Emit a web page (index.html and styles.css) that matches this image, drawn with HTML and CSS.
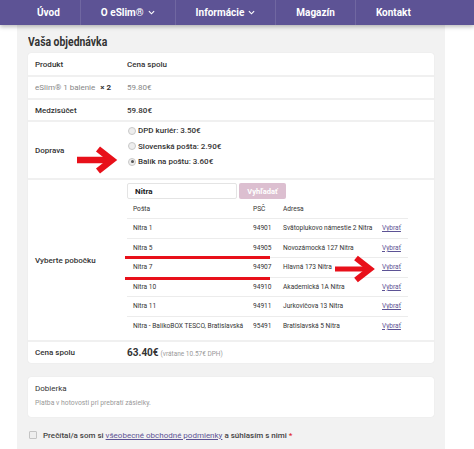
FILE: index.html
```html
<!DOCTYPE html>
<html lang="sk">

<head>
    <meta charset="UTF-8">
    <meta name="viewport" content="width=device-width, initial-scale=1.0">
    <title>Vaša objednávka</title>
    <link rel="stylesheet" href="styles.css">
</head>

<body>
    <nav class="topnav">
        <ul class="menu">
            <li><a href="#">Úvod</a></li>
            <li><a href="#">O eSlim® <svg class="chev" viewBox="0 0 8 5"><polyline points="1,1 4,4 7,1" /></svg></a></li>
            <li><a href="#">Informácie <svg class="chev" viewBox="0 0 8 5"><polyline points="1,1 4,4 7,1" /></svg></a></li>
            <li><a href="#">Magazín</a></li>
            <li><a href="#">Kontakt</a></li>
        </ul>
    </nav>

    <main class="page">
        <h2 class="section-title"><span>Vaša objednávka</span></h2>

        <div class="card order">
            <div class="row row-head">
                <div class="label">Produkt</div>
                <div class="value strong">Cena spolu</div>
            </div>
            <div class="row row-item">
                <div class="label muted">eSlim® 1 balenie <b class="qty">× 2</b></div>
                <div class="value muted">59.80€</div>
            </div>
            <div class="row row-sub">
                <div class="label">Medzisúčet</div>
                <div class="value strong">59.80€</div>
            </div>
            <div class="row row-ship">
                <div class="label">Doprava</div>
                <ul class="options">
                    <li><span class="radio"></span>DPD kuriér: 3.50€</li>
                    <li><span class="radio"></span>Slovenská pošta: 2.90€</li>
                    <li><span class="radio checked"></span>Balík na poštu: 3.60€</li>
                </ul>
            </div>
            <div class="row row-branch">
                <div class="label">Vyberte pobočku</div>
                <div class="branch">
                    <div class="search">
                        <input type="text" class="search-input" value="Nitra" aria-label="Hľadať">
                        <button class="search-btn">Vyhľadať</button>
                    </div>
                    <div class="branch-table">
                        <div class="b-row b-head">
                            <span>Pošta</span><span>PSČ</span><span>Adresa</span><span></span>
                        </div>
                        <div class="b-row">
                            <span>Nitra 1</span><span>94901</span><span>Svätoplukovo námestie 2 Nitra</span><a href="#">Vybrať</a>
                        </div>
                        <div class="b-row">
                            <span>Nitra 5</span><span>94905</span><span>Novozámocká 127 Nitra</span><a href="#">Vybrať</a>
                        </div>
                        <div class="b-row">
                            <span>Nitra 7</span><span>94907</span><span>Hlavná 173 Nitra</span><a href="#">Vybrať</a>
                        </div>
                        <div class="b-row">
                            <span>Nitra 10</span><span>94910</span><span>Akademická 1A Nitra</span><a href="#">Vybrať</a>
                        </div>
                        <div class="b-row">
                            <span>Nitra 11</span><span>94911</span><span>Jurkovičova 13 Nitra</span><a href="#">Vybrať</a>
                        </div>
                        <div class="b-row">
                            <span>Nitra - BalíkoBOX TESCO, Bratislavská</span><span>95491</span><span>Bratislavská 5 Nitra</span><a href="#">Vybrať</a>
                        </div>
                    </div>
                </div>
            </div>
            <div class="row row-total">
                <div class="label">Cena spolu</div>
                <div class="value"><span class="total">63.40€</span> <small class="tax">(vrátane 10.57€ DPH)</small></div>
            </div>
        </div>

        <div class="card payment">
            <div class="pay-title">Dobierka</div>
            <div class="pay-desc">Platba v hotovosti pri prebratí zásielky.</div>
        </div>

        <label class="terms"><span class="checkbox"></span>Prečítal/a som si <a href="#">všeobecné obchodné podmienky</a> a súhlasím s nimi <span class="req">*</span></label>
    </main>

    <!-- red annotations drawn over the screenshot -->
    <svg class="mark arrow-ship" viewBox="0 0 41 29">
        <line x1="0" y1="14" x2="33" y2="14" stroke-width="6.5" />
        <polyline points="21,3 35,14 21,25" stroke-width="6.5" />
    </svg>
    <div class="mark underline underline-top"></div>
    <div class="mark underline underline-bottom"></div>
    <svg class="mark arrow-pick" viewBox="0 0 41 29">
        <line x1="0" y1="14" x2="33" y2="14" stroke-width="5" />
        <polyline points="21,3 35,14 21,25" stroke-width="6" />
    </svg>
</body>

</html>
```

FILE: styles.css
```css
body {
    margin: 0;
    padding: 0;
    font-family: 'Roboto', 'Noto Sans', sans-serif;
    background: #fff;
    color: #333;
    position: relative;
    height: 449px;
    overflow: hidden;
}

/* top navigation */
.topnav {
    background: #5d5395;
    height: 25px;
    box-shadow: 0 2px 4px rgba(0, 0, 0, 0.25);
    position: relative;
    z-index: 2;
}

.menu {
    list-style: none;
    margin: 0 0 0 17px;
    padding: 0;
    display: flex;
    height: 25px;
}

.menu li {
    border-left: 1px solid rgba(255, 255, 255, 0.12);
}

.menu li:first-child {
    border-left: none;
}

.menu a {
    display: flex;
    align-items: center;
    gap: 4px;
    height: 25px;
    padding: 0 20px;
    color: #fff;
    font-size: 10px;
    font-weight: bold;
    text-decoration: none;
}

.chev {
    width: 7px;
    height: 5px;
    fill: none;
    stroke: #fff;
    stroke-width: 1.3;
}

/* page */
.page {
    background: #f2f2f2;
    width: 428px;
    margin-left: 17px;
    padding: 0 11px;
    box-sizing: border-box;
    height: 424px;
}

.section-title {
    margin: 0;
    padding-top: 9px;
    height: 19px;
    line-height: 16px;
    font-size: 13px;
    font-weight: bold;
    color: #333;
}

.section-title span {
    display: inline-block;
    transform: scaleX(0.8);
    transform-origin: left center;
}

.card {
    background: #fff;
    border-radius: 3px;
    box-shadow: 0 0 1px rgba(0, 0, 0, 0.12);
}

.row {
    display: grid;
    grid-template-columns: 99px 1fr;
    align-items: center;
    border-top: 2px solid #f0f0f0;
    box-sizing: border-box;
    font-size: 8px;
}

.row:first-child {
    border-top: none;
}

.label {
    padding-left: 7px;
    font-weight: 500;
    color: #333;
}

.strong {
    font-weight: 500;
    color: #333;
}

.muted {
    color: #888;
    font-weight: normal;
}

.qty {
    color: #333;
    margin-left: 3px;
}

.row-head { height: 22px; }
.row-item { height: 23px; }
.row-sub { height: 22px; }
.row-ship { height: 58px; }
.row-branch { height: 162px; }
.row-total { height: 23px; }

.options {
    list-style: none;
    margin: 0;
    padding: 1px 0 0;
    align-self: start;
    font-weight: 500;
    color: #333;
}

.options li {
    display: flex;
    align-items: center;
    height: 15.5px;
}

.radio {
    width: 6px;
    height: 6px;
    border: 1px solid #c9c9c9;
    border-radius: 50%;
    background: #eee;
    margin: 0 2px 0 1px;
    position: relative;
}

.radio.checked::after {
    content: "";
    position: absolute;
    left: 1.5px;
    top: 1.5px;
    width: 3px;
    height: 3px;
    border-radius: 50%;
    background: #555;
}

/* branch picker */
.branch {
    align-self: start;
    padding-top: 3px;
    width: 281px;
}

.search {
    display: flex;
    gap: 2px;
    height: 16px;
    margin-bottom: 1px;
}

.search-input {
    width: 110px;
    height: 16px;
    box-sizing: border-box;
    border: 1px solid #e4e4e4;
    border-radius: 2px;
    padding: 0 7px;
    font-family: inherit;
    font-size: 8px;
    font-weight: bold;
    color: #222;
    outline: none;
}

.search-btn {
    width: 47px;
    height: 16px;
    border: none;
    border-radius: 2px;
    background: #dcbfd0;
    color: #fff;
    font-family: inherit;
    font-size: 7.5px;
    font-weight: bold;
    padding: 0;
}

.branch-table {
    font-size: 6.6px;
    color: #333;
}

.b-row {
    display: grid;
    grid-template-columns: 120px 30px 99px 32px;
    align-items: center;
    height: 19.5px;
    border-top: 1px solid #ececec;
    box-sizing: border-box;
}

.b-row.b-head {
    height: 18px;
    border-top: none;
}

.b-row > * {
    padding-left: 6px;
    white-space: nowrap;
}

.b-row a {
    color: #5d5395;
    text-decoration: underline;
}

.total {
    font-size: 10px;
    font-weight: bold;
    color: #333;
}

.tax {
    font-size: 6.5px;
    color: #999;
}

/* payment */
.payment {
    margin-top: 14px;
    height: 40px;
    box-sizing: border-box;
    padding: 6px 7px 0;
}

.pay-title {
    font-size: 8px;
    line-height: 12px;
    color: #333;
}

.pay-desc {
    margin-top: 3px;
    font-size: 6.8px;
    line-height: 10px;
    color: #999;
}

.terms {
    display: block;
    margin-top: 13px;
    line-height: 12px;
    font-size: 8px;
    font-weight: 500;
    color: #444;
}

.checkbox {
    display: inline-block;
    vertical-align: -1px;
    width: 6px;
    height: 6px;
    border: 1px solid #c4c4c4;
    background: #eee;
    border-radius: 1px;
    margin: 0 6px 0 1px;
}

.terms a {
    color: #5d5395;
    font-weight: normal;
    text-decoration: underline;
}

.req {
    color: #e0262c;
}

/* annotations */
.mark {
    position: absolute;
    z-index: 3;
}

svg.mark {
    overflow: visible;
    fill: none;
    stroke: #e8101a;
    stroke-linejoin: miter;
}

.arrow-ship {
    left: 77px;
    top: 146px;
    width: 41px;
    height: 29px;
}

.arrow-pick {
    left: 335px;
    top: 255px;
    width: 41px;
    height: 29px;
}

.underline {
    left: 125px;
    width: 145px;
    height: 2.5px;
    background: #e8101a;
}

.underline-top {
    top: 256px;
}

.underline-bottom {
    top: 277px;
}
```
